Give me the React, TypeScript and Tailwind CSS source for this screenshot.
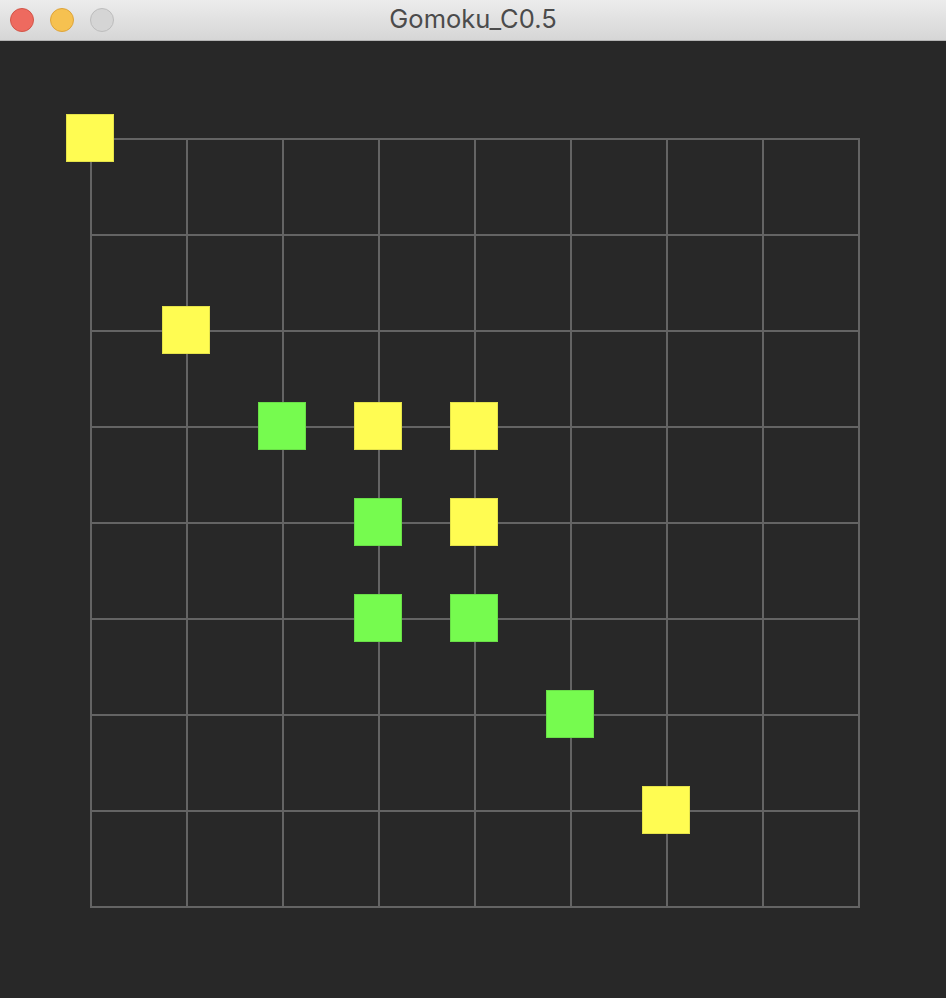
import React from "react";

type Stone = { c: number; r: number; color: "y" | "g" };

const stones: Stone[] = [
  { c: 0, r: 0, color: "y" },
  { c: 1, r: 2, color: "y" },
  { c: 2, r: 3, color: "g" },
  { c: 3, r: 3, color: "y" },
  { c: 4, r: 3, color: "y" },
  { c: 3, r: 4, color: "g" },
  { c: 4, r: 4, color: "y" },
  { c: 3, r: 5, color: "g" },
  { c: 4, r: 5, color: "g" },
  { c: 5, r: 6, color: "g" },
  { c: 6, r: 7, color: "y" },
];

export default function App() {
  const cells = Array.from({ length: 64 });
  return (
    <div className="w-[946px] h-[998px] bg-[#282828] flex flex-col overflow-hidden" style={{ fontFamily: "Inter, 'Open Sans', 'Liberation Sans', sans-serif" }}>
      <div className="relative h-[41px] shrink-0 bg-gradient-to-b from-[#ececec] to-[#d6d6d6] border-b border-[#b4b4b4] flex items-center">
        <div className="flex items-center gap-[16px] pl-[10px]">
          <div className="w-[24px] h-[24px] rounded-full bg-[#ee6a5f] border border-[#d25548]" />
          <div className="w-[24px] h-[24px] rounded-full bg-[#f6c150] border border-[#dea43a]" />
          <div className="w-[24px] h-[24px] rounded-full bg-[#d5d5d5] border border-[#bdbdbd]" />
        </div>
        <div className="absolute inset-0 flex items-center justify-center text-[25.5px] text-[#4b4b4b] pb-[1px]">
          Gomoku_C0.5
        </div>
      </div>
      <div className="pl-[90px] pt-[97px]">
        <div className="relative w-[770px] h-[770px]">
          <div className="grid grid-cols-8 w-[770px] h-[770px] border-t-2 border-l-2 border-[#646464]">
            {cells.map((_, i) => (
              <div key={i} className="border-r-2 border-b-2 border-[#646464]" />
            ))}
          </div>
          {stones.map((s, i) => (
            <div
              key={i}
              className={
                "absolute w-[48px] h-[48px] border " +
                (s.color === "y" ? "bg-[#fffc52] border-[#e4e24a]" : "bg-[#76fb4f] border-[#6ade48]")
              }
              style={{ left: -24 + 96 * s.c, top: -24 + 96 * s.r }}
            />
          ))}
        </div>
      </div>
    </div>
  );
}
